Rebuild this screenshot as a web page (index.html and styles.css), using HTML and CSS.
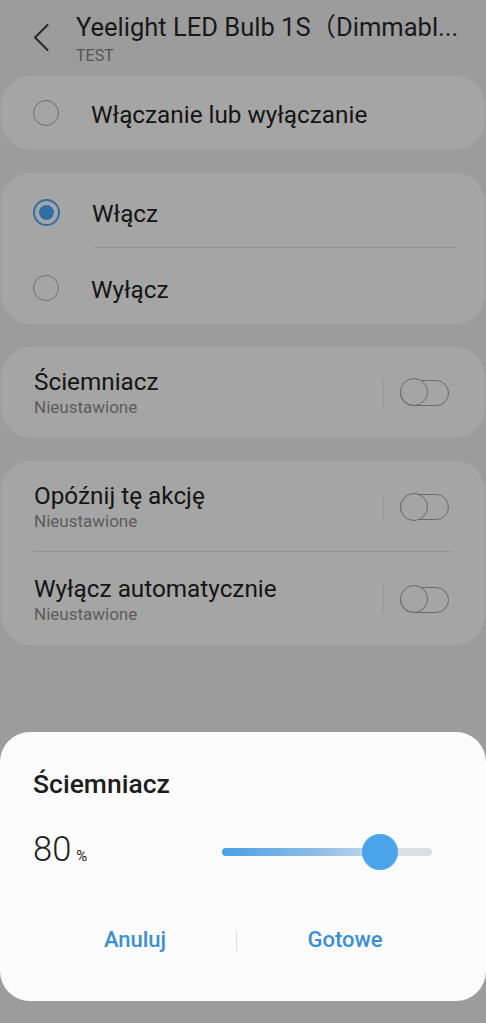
FILE: index.html
```html
<!DOCTYPE html>
<html>
   <head>
      <meta http-equiv="Content-Type" content="text/html; charset=UTF-8" />
      <meta name="viewport" content="width=device-width, initial-scale=1" />
      <title>Yeelight LED Bulb 1S</title>
      <link rel="stylesheet" href="styles.css">
   </head>
   <body>
      <div class="screen">
         <div class="header">
            <div class="back">
               <svg width="16" height="27" viewBox="0 0 16 27"><path d="M14.5 1 L2 13.5 L14.5 26" fill="none" stroke="#262626" stroke-width="2" stroke-linecap="round" stroke-linejoin="round"/></svg>
            </div>
            <div class="titles">
               <div class="title">Yeelight LED Bulb 1S（Dimmabl...</div>
               <div class="subtitle">TEST</div>
            </div>
         </div>

         <div class="card">
            <div class="radio-row single">
               <span class="radio"></span>
               <span class="label">Włączanie lub wyłączanie</span>
            </div>
         </div>

         <div class="card">
            <div class="radio-row first">
               <span class="radio on"></span>
               <span class="label">Włącz</span>
            </div>
            <div class="sep"></div>
            <div class="radio-row last">
               <span class="radio"></span>
               <span class="label">Wyłącz</span>
            </div>
         </div>

         <div class="card">
            <div class="switch-row single">
               <div class="text">
                  <div class="label">Ściemniacz</div>
                  <div class="hint">Nieustawione</div>
               </div>
               <span class="vbar"></span>
               <span class="toggle"></span>
            </div>
         </div>

         <div class="card">
            <div class="switch-row first">
               <div class="text">
                  <div class="label">Opóźnij tę akcję</div>
                  <div class="hint">Nieustawione</div>
               </div>
               <span class="vbar"></span>
               <span class="toggle"></span>
            </div>
            <div class="sep wide"></div>
            <div class="switch-row last">
               <div class="text">
                  <div class="label">Wyłącz automatycznie</div>
                  <div class="hint">Nieustawione</div>
               </div>
               <span class="vbar"></span>
               <span class="toggle"></span>
            </div>
         </div>

         <div class="sheet">
            <div class="sheet-title">Ściemniacz</div>
            <div class="value-row">
               <div class="value">80<span class="unit">%</span></div>
               <div class="slider">
                  <div class="track"></div>
                  <div class="fill" style="width: 75%"></div>
                  <div class="thumb" style="left: 75%"></div>
               </div>
            </div>
            <div class="buttons">
               <button>Anuluj</button>
               <span class="bsep"></span>
               <button>Gotowe</button>
            </div>
         </div>
      </div>
   </body>
</html>
```

FILE: styles.css
```css
body { margin:0; background:#9c9c9c; font-family: Roboto, 'Noto Sans', 'Noto Sans CJK SC', sans-serif; color:#161616; }
.screen { display:flex; flex-direction:column; min-height:100vh; }

/* cabecera */
.header { display:flex; align-items:flex-start; height:76px; box-sizing:border-box; padding-top:13px; }
.back { width:76px; flex:none; }
.back svg { display:block; margin:11px 0 0 33px; }
.titles { min-width:0; flex:1; }
.title { font-size:25.5px; line-height:29px; white-space:nowrap; color:#191919; }
.subtitle { font-size:16px; line-height:20px; margin-top:4px; color:#555; }

/* tarjetas */
.card { background:#a5a5a5; border-radius:30px; margin:0 1px 23px; }
.label { font-size:24.3px; line-height:28px; color:#141414; }
.radio-row { display:flex; align-items:center; padding-left:32px; }
.radio-row.single { height:74px; }
.radio-row.first { height:74px; padding-top:4px; box-sizing:border-box; }
.radio-row.last { height:76px; padding-top:4px; box-sizing:border-box; }
.radio-row .label { margin-left:32px; padding-top:3px; }
.radio { width:24px; height:24px; border:1.5px solid #6f6f6f; border-radius:50%; flex:none; display:flex; align-items:center; justify-content:center; }
.radio.on { border:2px solid #2f6ea6; width:23px; height:23px; }
.radio.on::after { content:''; width:15px; height:15px; border-radius:50%; background:#2f6ea6; }
.sep { height:1px; background:#959595; margin:0 27px 0 92px; }
.sep.wide { margin:0 32px 0 32px; }

.switch-row { display:flex; align-items:center; padding:0 36px 0 33px; box-sizing:border-box; }
.switch-row.single { height:91px; }
.switch-row.first { height:90px; padding-top:2px; }
.switch-row.last { height:93px; padding-top:2px; }
.switch-row .text { flex:1; }
.hint { font-size:17px; line-height:22px; color:#5c5c5c; }
.vbar { width:1px; height:29px; background:#999; margin-right:16px; }
.toggle { position:relative; width:47px; height:24px; border:1.5px solid #6a6a6a; border-radius:14px; flex:none; }
.toggle::before { content:''; position:absolute; left:-1.5px; top:-2.5px; width:26px; height:26px; border:1.5px solid #6a6a6a; border-radius:50%; background:#a5a5a5; }

/* hoja inferior */
.sheet { margin-top:auto; margin-bottom:22px; background:#fcfcfc; border-radius:30px; padding:36px 0 37px; }
.sheet-title { font-size:26.5px; line-height:32px; font-weight:500; color:#1d1d1d; padding-left:33px; }
.value-row { display:flex; align-items:center; height:44px; margin-top:30px; padding:0 54px 0 33px; }
.value { width:189px; font-size:34.5px; font-weight:300; color:#222; line-height:44px; }
.unit { font-size:15px; font-weight:400; margin-left:5px; }
.slider { position:relative; flex:1; height:36px; }
.track { position:absolute; left:0; right:0; top:14px; height:8px; border-radius:4px; background:#dcdfe2; }
.fill { position:absolute; left:0; top:14px; height:8px; border-radius:4px; background:linear-gradient(to right, #4a9fe5, #8dbde6 60%, #c9dbeb); }
.thumb { position:absolute; top:0; width:36px; height:36px; margin-left:-18px; border-radius:50%; background:#4aa4ea; }
.buttons { display:grid; grid-template-columns:202px 1px 216px; align-items:center; height:48px; margin-top:42px; padding-left:34px; }
.buttons button { border:0; background:none; font-family:inherit; font-size:22px; font-weight:500; color:#3b8fd6; padding:0; line-height:48px; }
.bsep { width:1px; height:21px; background:#dedede; }
```
